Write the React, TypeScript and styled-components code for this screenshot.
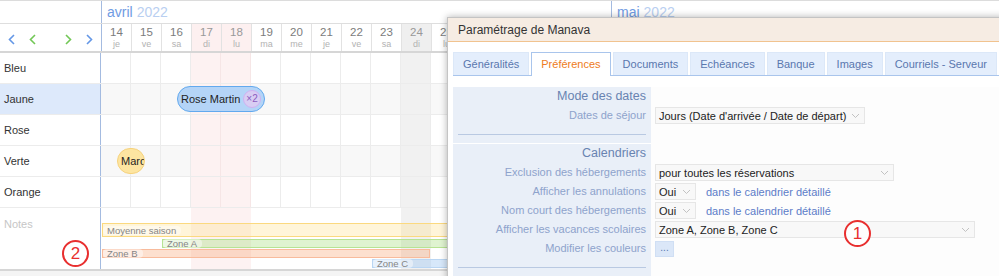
import styled, { createGlobalStyle, css } from 'styled-components';

const GlobalStyle = createGlobalStyle`
  html, body {
    margin: 0;
    padding: 0;
    background: #f4f4f4;
    font-family: "Liberation Sans", Arial, sans-serif;
  }
`;

type DayKind = 'normal' | 'holiday' | 'sunday';
type Day = { n: number; wd: string; kind: DayKind; lastOfMonth: boolean };

const WD = ['di', 'lu', 'ma', 'me', 'je', 've', 'sa'];

const buildDays = (): Day[] => {
  const list: Day[] = [];
  const start = new Date(2022, 3, 14);
  for (let i = 0; i < 30; i++) {
    const d = new Date(start.getFullYear(), start.getMonth(), start.getDate() + i);
    const next = new Date(d.getFullYear(), d.getMonth(), d.getDate() + 1);
    const n = d.getDate();
    const isHoliday = d.getMonth() === 3 && (n === 17 || n === 18);
    list.push({
      n,
      wd: WD[d.getDay()],
      kind: isHoliday ? 'holiday' : d.getDay() === 0 ? 'sunday' : 'normal',
      lastOfMonth: next.getMonth() !== d.getMonth(),
    });
  }
  return list;
};

const days = buildDays();
const DAY_W = 30;

const Page = styled.div`
  position: relative;
  width: 999px;
  height: 276px;
  overflow: hidden;
`;

const Calendar = styled.div`
  width: max-content;
  background: #fff;
  border-top: 1px solid #dcdcdc;
  border-bottom: 2px solid #d6d6d6;
`;

const Line = styled.div`
  display: flex;
`;

const Corner = styled.div<{ $h: number }>`
  width: 101px;
  height: ${(p) => p.$h}px;
  flex: none;
  border-right: 1px solid #a4bbe0;
  background: #fff;
`;

const MonthLine = styled(Line)`
  border-bottom: 1px solid #dedede;
`;

const MonthCell = styled.div<{ $w: number }>`
  width: ${(p) => p.$w}px;
  height: 22px;
  box-sizing: border-box;
  border-right: 1px solid #a4bbe0;
  padding-left: 5px;
  font-size: 14px;
  line-height: 22px;
  color: #6f9be3;
  white-space: nowrap;

  span {
    color: #b9cff1;
    margin-left: 4px;
  }
`;

const DayLine = styled(Line)`
  border-bottom: 2px solid #d6d6d6;
`;

const NavBar = styled.div`
  display: flex;
  justify-content: space-between;
  align-items: center;
  padding: 4px 8px 0;
  height: 23px;
`;

const NavGroup = styled.div`
  display: flex;
  gap: 14px;
`;

const DayHead = styled.div<{ $kind: DayKind; $last: boolean }>`
  width: ${DAY_W}px;
  height: 27px;
  box-sizing: border-box;
  border-right: 1px solid ${(p) => (p.$last ? '#a4bbe0' : '#e2e2e2')};
  background: ${(p) => (p.$kind === 'holiday' ? '#fdf0f0' : p.$kind === 'sunday' ? '#efefef' : '#fff')};
  text-align: center;
  padding-top: 2px;

  b {
    display: block;
    font-weight: normal;
    font-size: 11.5px;
    line-height: 13px;
    color: ${(p) => (p.$kind === 'normal' ? '#7c7c7c' : '#999')};
  }
  i {
    display: block;
    font-style: normal;
    font-size: 9px;
    line-height: 11px;
    color: #b2b2b2;
  }
`;

const RowLabel = styled.div<{ $active?: boolean }>`
  width: 101px;
  flex: none;
  border-right: 1px solid #a4bbe0;
  background: ${(p) => (p.$active ? '#dde9fb' : '#fff')};
  padding-left: 4px;
  box-sizing: border-box;
  font-size: 11px;
  line-height: 30px;
  color: #333;
`;

const ResLine = styled(Line)`
  height: 30px;
  border-bottom: 1px solid #ececec;
`;

const Track = styled.div`
  position: relative;
  display: flex;
`;

const Cell = styled.div<{ $kind: DayKind; $alt?: boolean; $grid?: boolean }>`
  width: ${DAY_W}px;
  flex: none;
  box-sizing: border-box;
  ${(p) =>
    p.$grid &&
    css`
      border-right: 1px solid ${p.$kind === 'holiday' ? '#f6e6e6' : '#ececec'};
    `}
  background: ${(p) =>
    p.$kind === 'holiday' ? '#fdf2f2' : p.$kind === 'sunday' ? '#f1f1f1' : p.$alt ? '#f8f8f8' : '#fff'};
`;

const Booking = styled.div<{ $left: number; $width: number; $tone: 'blue' | 'yellow' }>`
  position: absolute;
  top: 2px;
  left: ${(p) => p.$left}px;
  width: ${(p) => p.$width}px;
  height: 26px;
  box-sizing: border-box;
  border-radius: 13px;
  display: flex;
  align-items: center;
  justify-content: space-between;
  padding: 0 3px 0 3px;
  overflow: hidden;
  white-space: nowrap;
  font-size: 11px;
  color: #1f1f1f;
  ${(p) =>
    p.$tone === 'blue'
      ? css`
          background: #b4d4f7;
          border: 1px solid #62a9ee;
        `
      : css`
          background: #fde5a1;
          border: 1px solid #f6d27c;
        `}
`;

const CountBadge = styled.span`
  flex: none;
  width: 18px;
  height: 18px;
  border-radius: 50%;
  box-sizing: border-box;
  border: 1px solid #cfb0f1;
  background: #d8cdf3;
  color: #8a5cc0;
  font-size: 10px;
  line-height: 16px;
  text-align: center;
`;

const NotesLine = styled(Line)`
  height: 61px;
`;

const NotesLabel = styled(RowLabel)`
  color: #c6c6c6;
  line-height: 14px;
  padding-top: 9px;
`;

const Band = styled.div<{ $left: number; $top: number; $width: number; $h: number; $bg: string; $bd: string }>`
  position: absolute;
  left: ${(p) => p.$left}px;
  top: ${(p) => p.$top}px;
  width: ${(p) => p.$width}px;
  height: ${(p) => p.$h}px;
  box-sizing: border-box;
  background: ${(p) => p.$bg};
  border: 1px solid ${(p) => p.$bd};
  display: flex;
  align-items: center;
`;

const BandLabel = styled.span`
  font-size: 9.5px;
  line-height: 9px;
  color: #858585;
  padding: 0 5px 0 4px;
  border-radius: 4px;
  background: rgba(255, 255, 255, 0.45);
  white-space: nowrap;
`;

const Marker = styled.div<{ $x: number; $y: number }>`
  position: absolute;
  left: ${(p) => p.$x}px;
  top: ${(p) => p.$y}px;
  width: 27px;
  height: 27px;
  box-sizing: border-box;
  border: 2px solid #e82f2f;
  border-radius: 50%;
  background: rgba(255, 255, 255, 0.85);
  color: #e82f2f;
  font-size: 17px;
  line-height: 23px;
  text-align: center;
`;

/* dialog */

const Dialog = styled.div`
  position: absolute;
  left: 447px;
  top: 17px;
  width: 620px;
  height: 280px;
  background: #fff;
  border: 1px solid #c4c4c4;
  box-shadow: 0 0 7px rgba(0, 0, 0, 0.3);
`;

const DialogHead = styled.div`
  height: 23px;
  background: #f6ece3;
  border-bottom: 1px solid #f1c38f;
  padding-left: 10px;
  font-size: 12px;
  line-height: 24px;
  color: #333;
`;

const DialogBody = styled.div`
  padding: 10px 0 0 5px;
`;

const TabList = styled.div`
  display: flex;
  gap: 2px;
  width: 546px;
  border-bottom: 1px solid #a9c5ec;
`;

const Tab = styled.div<{ $active?: boolean }>`
  height: 22px;
  padding: 0 9px;
  border: 1px solid ${(p) => (p.$active ? '#a9c5ec' : '#dce8f8')};
  border-bottom: none;
  background: ${(p) => (p.$active ? '#fff' : '#e4eefc')};
  color: ${(p) => (p.$active ? '#ee7b22' : '#5a77ae')};
  font-size: 11px;
  line-height: 22px;
  margin-bottom: ${(p) => (p.$active ? '-1px' : '0')};
  padding-bottom: ${(p) => (p.$active ? '1px' : '0')};
  white-space: nowrap;
`;

const Form = styled.div`
  margin-top: 11px;
  display: grid;
  grid-template-columns: 198px 1fr;
  grid-auto-rows: 19px;
`;

const Label = styled.div<{ $head?: boolean }>`
  background: #e9eff8;
  text-align: right;
  padding-right: 5px;
  font-size: ${(p) => (p.$head ? '12.5px' : '11px')};
  line-height: 19px;
  color: ${(p) => (p.$head ? '#6883b1' : '#8ea3cc')};
  white-space: nowrap;
`;

const Field = styled.div`
  display: flex;
  align-items: center;
  gap: 10px;
  padding-left: 4px;
  background: #fdfdfd;
`;

const SepLabel = styled.div`
  background: #e9eff8;
  height: 18px;
  padding: 0 5px;
  display: flex;
  align-items: center;
  &::after {
    content: '';
    flex: 1;
    height: 1px;
    background: #b9c9e2;
  }
`;

const Select = styled.div<{ $w: number }>`
  width: ${(p) => p.$w}px;
  height: 17px;
  box-sizing: border-box;
  border: 1px solid #e6e6e6;
  background: #f8f8f8;
  display: flex;
  align-items: center;
  justify-content: space-between;
  padding: 0 4px 0 3px;
  font-size: 11px;
  color: #222;
  white-space: nowrap;
`;

const Hint = styled.span`
  font-size: 11px;
  color: #5c7cc8;
  white-space: nowrap;
`;

const DotsButton = styled.div`
  width: 19px;
  height: 16px;
  box-sizing: border-box;
  background: #dbe7f8;
  border: 1px solid #d0dff4;
  color: #5a77ae;
  font-size: 10px;
  line-height: 12px;
  text-align: center;
`;

const Chevron = ({ dir, color }: { dir: 'left' | 'right'; color: string }) => (
  <svg width="7" height="11" viewBox="0 0 7 11">
    <polyline
      points={dir === 'left' ? '6,1 1.5,5.5 6,10' : '1,1 5.5,5.5 1,10'}
      fill="none"
      stroke={color}
      strokeWidth="1.6"
    />
  </svg>
);

const Caret = () => (
  <svg width="9" height="6" viewBox="0 0 9 6">
    <polyline points="1,1 4.5,4.5 8,1" fill="none" stroke="#c2c2c2" strokeWidth="1" />
  </svg>
);

const rows = [
  { name: 'Bleu' },
  { name: 'Jaune', active: true, alt: true },
  { name: 'Rose' },
  { name: 'Verte', alt: true },
  { name: 'Orange' },
];

const tabs = ['Généralités', 'Préférences', 'Documents', 'Echéances', 'Banque', 'Images', 'Courriels - Serveur'];

const april = days.findIndex((x) => x.lastOfMonth) + 1;

export default function App() {
  return (
    <Page>
      <GlobalStyle />
      <Calendar>
        <MonthLine>
          <Corner $h={22} />
          <MonthCell $w={april * DAY_W}>
            avril<span>2022</span>
          </MonthCell>
          <MonthCell $w={(days.length - april) * DAY_W}>
            mai<span>2022</span>
          </MonthCell>
        </MonthLine>

        <DayLine>
          <Corner $h={27}>
            <NavBar>
              <NavGroup>
                <Chevron dir="left" color="#6497e6" />
                <Chevron dir="left" color="#72c756" />
              </NavGroup>
              <NavGroup>
                <Chevron dir="right" color="#72c756" />
                <Chevron dir="right" color="#6497e6" />
              </NavGroup>
            </NavBar>
          </Corner>
          {days.map((d, i) => (
            <DayHead key={i} $kind={d.kind} $last={d.lastOfMonth}>
              <b>{d.n}</b>
              <i>{d.wd}</i>
            </DayHead>
          ))}
        </DayLine>

        {rows.map((r) => (
          <ResLine key={r.name}>
            <RowLabel $active={r.active}>{r.name}</RowLabel>
            <Track>
              {days.map((d, i) => (
                <Cell key={i} $kind={d.kind} $alt={r.alt} $grid />
              ))}
              {r.name === 'Jaune' && (
                <Booking $tone="blue" $left={76} $width={88}>
                  Rose Martin
                  <CountBadge>×2</CountBadge>
                </Booking>
              )}
              {r.name === 'Verte' && (
                <Booking $tone="yellow" $left={16} $width={28}>
                  Marc
                </Booking>
              )}
            </Track>
          </ResLine>
        ))}

        <NotesLine>
          <NotesLabel>Notes</NotesLabel>
          <Track>
            {days.map((d, i) => (
              <Cell key={i} $kind={d.kind} />
            ))}
            <Band $left={1} $top={15} $width={880} $h={14} $bg="rgba(255, 222, 130, 0.3)" $bd="#fbd97f">
              <BandLabel>Moyenne saison</BandLabel>
            </Band>
            <Band $left={61} $top={31} $width={820} $h={9} $bg="rgba(150, 215, 100, 0.3)" $bd="#b7e393">
              <BandLabel>Zone A</BandLabel>
            </Band>
            <Band $left={1} $top={41} $width={328} $h={9} $bg="rgba(250, 160, 110, 0.33)" $bd="#f8bb9c">
              <BandLabel>Zone B</BandLabel>
            </Band>
            <Band $left={271} $top={51} $width={610} $h={9} $bg="rgba(140, 190, 240, 0.35)" $bd="#bad6f3">
              <BandLabel>Zone C</BandLabel>
            </Band>
          </Track>
        </NotesLine>
      </Calendar>

      <Marker $x={62} $y={240}>2</Marker>

      <Dialog>
        <DialogHead>Paramétrage de Manava</DialogHead>
        <DialogBody>
          <TabList>
            {tabs.map((t) => (
              <Tab key={t} $active={t === 'Préférences'}>
                {t}
              </Tab>
            ))}
          </TabList>

          <Form>
            <Label $head>Mode des dates</Label>
            <Field />
            <Label>Dates de séjour</Label>
            <Field>
              <Select $w={210}>
                Jours (Date d'arrivée / Date de départ)
                <Caret />
              </Select>
            </Field>
            <SepLabel />
            <Field />
            <Label $head>Calendriers</Label>
            <Field />
            <Label>Exclusion des hébergements</Label>
            <Field>
              <Select $w={239}>
                pour toutes les réservations
                <Caret />
              </Select>
            </Field>
            <Label>Afficher les annulations</Label>
            <Field>
              <Select $w={41}>
                Oui
                <Caret />
              </Select>
              <Hint>dans le calendrier détaillé</Hint>
            </Field>
            <Label>Nom court des hébergements</Label>
            <Field>
              <Select $w={41}>
                Oui
                <Caret />
              </Select>
              <Hint>dans le calendrier détaillé</Hint>
            </Field>
            <Label>Afficher les vacances scolaires</Label>
            <Field>
              <Select $w={320}>
                Zone A, Zone B, Zone C
                <Caret />
              </Select>
            </Field>
            <Label>Modifier les couleurs</Label>
            <Field>
              <DotsButton>...</DotsButton>
            </Field>
            <SepLabel />
            <Field />
            <Label />
            <Field />
          </Form>
        </DialogBody>
      </Dialog>

      <Marker $x={844} $y={220}>1</Marker>
    </Page>
  );
}
